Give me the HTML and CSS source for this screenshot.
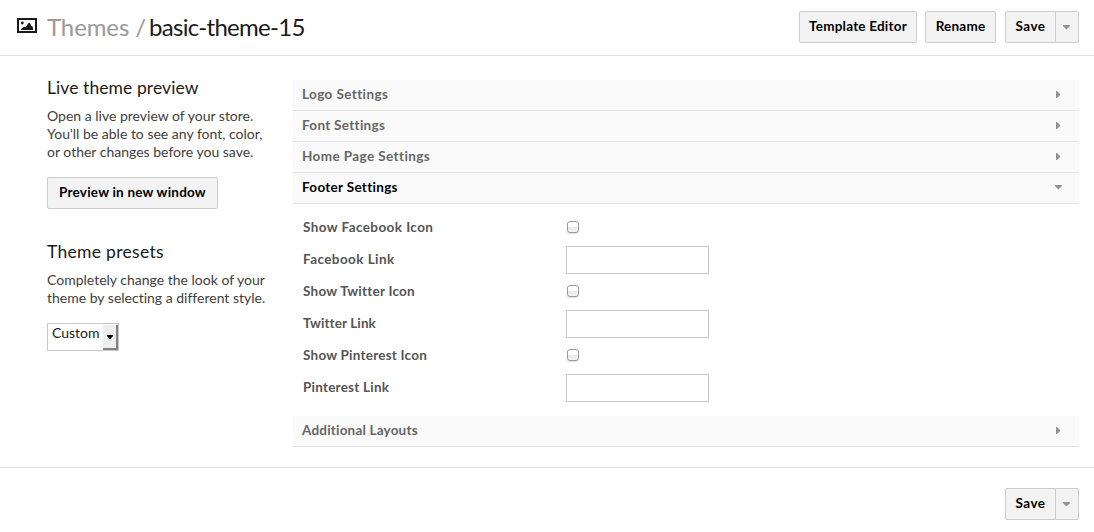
FILE: index.html
```html
<!DOCTYPE html>
<html lang="en">
<head>
<meta charset="utf-8">
<title>Themes / basic-theme-15</title>
<link rel="stylesheet" href="styles.css">
</head>
<body>
<header class="topbar">
  <svg class="theme-icon" width="20" height="15" viewBox="0 0 20 15"><path fill="#1a1a1a" fill-rule="evenodd" d="M0 0H20V15H0ZM2 2V13H18V2Z"/><circle cx="5.3" cy="5" r="1.4" fill="#1a1a1a"/><path fill="#1a1a1a" d="M4 12V11L7 8.8L8.5 9.3L11.5 5H13L14.5 8L15.3 8.3L16 10V12Z"/></svg>
  <h1 class="title"><span class="crumb">Themes /</span><span class="name">basic-theme-15</span></h1>
  <div class="actions">
    <button class="btn template">Template Editor</button>
    <button class="btn rename">Rename</button>
    <div class="split"><button class="btn save">Save</button><button class="btn more" aria-label="More"><svg width="7" height="4" viewBox="0 0 7 4"><path fill="#929292" d="M0 0H7V1L4 4H3L0 1Z"/></svg></button></div>
  </div>
</header>
<main class="content">
  <aside class="sidebar">
    <section class="preview">
      <h2 class="heading h-preview">Live theme preview</h2>
      <p class="copy">Open a live preview of your store.<br>You'll be able to see any font, color,<br>or other changes before you save.</p>
      <button class="btn open">Preview in new window</button>
    </section>
    <section class="presets">
      <h2 class="heading h-presets">Theme presets</h2>
      <p class="copy">Completely change the look of your<br>theme by selecting a different style.</p>
      <div class="select"><span class="value">Custom</span><span class="drop"><svg width="6" height="4" viewBox="0 0 6 4"><path fill="#000" d="M0 0H6V1L3.5 4H2.5L0 1Z"/></svg></span></div>
    </section>
  </aside>
  <div class="settings">
    <div class="bar"><span class="t-logo">Logo Settings</span><svg class="arrow" width="4" height="7" viewBox="0 0 4 7"><path fill="#929292" d="M0 0H1L4 3V4L1 7H0Z"/></svg></div>
    <div class="bar"><span class="t-font">Font Settings</span><svg class="arrow" width="4" height="7" viewBox="0 0 4 7"><path fill="#929292" d="M0 0H1L4 3V4L1 7H0Z"/></svg></div>
    <div class="bar"><span class="t-home">Home Page Settings</span><svg class="arrow" width="4" height="7" viewBox="0 0 4 7"><path fill="#929292" d="M0 0H1L4 3V4L1 7H0Z"/></svg></div>
    <div class="bar active"><span class="t-footer">Footer Settings</span><svg class="arrow down" width="7" height="4" viewBox="0 0 7 4"><path fill="#929292" d="M0 0H7V1L4 4H3L0 1Z"/></svg></div>
    <div class="form">
      <label class="field"><span class="label wide">Show Facebook Icon</span><input class="check" type="checkbox"></label>
      <label class="field"><span class="label wide">Facebook Link</span><input class="text" type="text"></label>
      <label class="field"><span class="label">Show Twitter Icon</span><input class="check" type="checkbox"></label>
      <label class="field"><span class="label tight">Twitter Link</span><input class="text" type="text"></label>
      <label class="field"><span class="label">Show Pinterest Icon</span><input class="check" type="checkbox"></label>
      <label class="field"><span class="label">Pinterest Link</span><input class="text" type="text"></label>
    </div>
    <div class="bar"><span class="t-additional">Additional Layouts</span><svg class="arrow" width="4" height="7" viewBox="0 0 4 7"><path fill="#929292" d="M0 0H1L4 3V4L1 7H0Z"/></svg></div>
  </div>
</main>
<footer class="bottombar">
  <div class="split"><button class="btn save">Save</button><button class="btn more" aria-label="More"><svg width="7" height="4" viewBox="0 0 7 4"><path fill="#929292" d="M0 0H7V1L4 4H3L0 1Z"/></svg></button></div>
</footer>
</body>
</html>
```

FILE: styles.css
```css
* { box-sizing: border-box; }
body { margin: 0; height: 532px; overflow: hidden; background: #fff; color: #404040; font-family: Lato, "Open Sans", sans-serif; font-size: 14px; font-variant-ligatures: none; }
h1, h2, p { margin: 0; font-weight: 400; white-space: nowrap; }
svg { display: block; flex: none; }
.topbar { display: flex; align-items: flex-start; height: 56px; padding: 11px 15px 0 17px; border-bottom: 1px solid #e3e3e3; }
.theme-icon { margin-top: 7px; }
.title { display: flex; margin-left: 10px; font-size: 24px; line-height: 31px; color: #1a1a1a; }
.crumb { width: 102px; color: #999; letter-spacing: -0.1px; }
.name { letter-spacing: -0.7px; }
.actions { display: flex; margin-left: auto; }
.btn { height: 32px; padding: 0 0 2px; border: 1px solid #ccc; border-radius: 2px; background: #f3f3f3; color: #000; font: 700 13.5px Lato, "Open Sans", sans-serif; letter-spacing: 0.22px; white-space: nowrap; }
.template { width: 118px; margin-right: 8px; }
.rename { width: 71px; margin-right: 9px; }
.split { display: flex; }
.save { width: 51px; border-radius: 2px 0 0 2px; letter-spacing: 0.5px; }
.more { display: flex; align-items: center; justify-content: center; width: 24px; padding: 0 1px 0 0; margin-left: -1px; border-radius: 0 2px 2px 0; }
.content { display: flex; height: 411px; padding: 24px 15px 0 47px; }
.sidebar { width: 246px; }
.heading { height: 27px; font-size: 17.5px; line-height: 16px; color: #1a1a1a; }
.h-preview { letter-spacing: 0.08px; }
.h-presets { letter-spacing: 0.3px; }
.copy { font-size: 14px; line-height: 18px; }
.open { width: 171px; margin-top: 16px; }
.presets { margin-top: 35px; }
.select { display: flex; justify-content: space-between; width: 72px; height: 28px; margin-top: 16px; border: 1px solid #c8c8c8; }
.value { padding-left: 4px; line-height: 18px; font-size: 14px; color: #1a1a1a; }
.drop { display: flex; align-items: center; justify-content: center; width: 15px; height: 25px; margin-top: 1px; border: solid #828282; border-width: 0 2px 2px 0; background: #eee; }
.settings { width: 786px; }
.bar { display: flex; align-items: center; justify-content: space-between; height: 31px; padding: 0 19px 2px 9px; border-bottom: 1px solid #e3e3e3; background: #fafafa; font-weight: 700; font-size: 13.5px; color: #666; white-space: nowrap; }
.t-logo, .t-home { letter-spacing: 0.4px; }
.t-font, .t-footer { letter-spacing: 0.3px; }
.t-additional { letter-spacing: 0.2px; }
.active { color: #000; }
.arrow.down { margin-right: -2px; }
.form { padding: 8px 0 12px 10px; }
.field { display: flex; height: 32px; }
.label { width: 263px; padding-top: 6px; line-height: 18px; font-weight: 700; font-size: 13.5px; letter-spacing: 0.23px; color: #555; }
.wide { letter-spacing: 0.42px; }
.tight { letter-spacing: 0.1px; }
.check { appearance: none; width: 12px; height: 12px; margin: 9px 0 0 1px; border: 1px solid #999; border-radius: 3px; background: linear-gradient(#fff 45%, #ececec 55%, #f4f4f4); box-shadow: 0 1px 1px #ddd; }
.text { width: 143px; height: 28px; margin: 2px 0 0; padding: 0 4px; border: 1px solid #c8c8c8; background: #fff; }
.bottombar { display: flex; justify-content: flex-end; padding: 20px 15px 0; border-top: 1px solid #e3e3e3; }
```
